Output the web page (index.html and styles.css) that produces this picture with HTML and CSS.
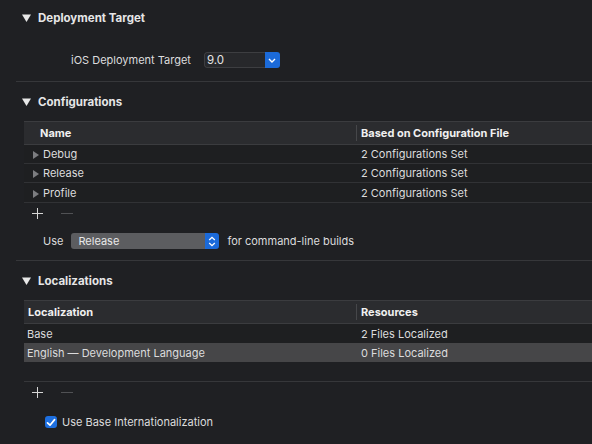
FILE: index.html
```html
<!DOCTYPE html>
<html lang="en">
<head>
    <meta charset="UTF-8">
    <title>Project Info</title>
    <link rel="stylesheet" href="styles.css">
</head>
<body>

    <!-- Deployment target -->
    <div class="section first">
        <div class="section-head">
            <svg class="disclosure" width="9" height="8" viewBox="0 0 9 8"><path d="M0 0.5H9L4.5 8Z" fill="#e8e8e8"/></svg>
            <span>Deployment Target</span>
        </div>
        <div class="target-row">
            <span class="label">iOS Deployment Target</span>
            <div class="combo">
                <span class="combo-text">9.0</span>
                <span class="combo-btn">
                    <svg width="8" height="5" viewBox="0 0 8 5"><path d="M1 1L4 4L7 1" stroke="#fff" stroke-width="1.4" fill="none"/></svg>
                </span>
            </div>
        </div>
    </div>

    <!-- Configurations -->
    <div class="section">
        <div class="section-head">
            <svg class="disclosure" width="9" height="8" viewBox="0 0 9 8"><path d="M0 0.5H9L4.5 8Z" fill="#e8e8e8"/></svg>
            <span>Configurations</span>
        </div>
        <div class="table config-table">
            <div class="thead">
                <div class="col-a">Name</div>
                <div class="col-b">Based on Configuration File</div>
            </div>
            <div class="row">
                <div class="col-a"><span class="expander"></span>Debug</div>
                <div class="col-b">2 Configurations Set</div>
            </div>
            <div class="row">
                <div class="col-a"><span class="expander"></span>Release</div>
                <div class="col-b">2 Configurations Set</div>
            </div>
            <div class="row last-row">
                <div class="col-a"><span class="expander"></span>Profile</div>
                <div class="col-b">2 Configurations Set</div>
            </div>
        </div>
        <div class="add-remove">
            <span class="add"></span>
            <span class="remove"></span>
        </div>
        <div class="use-row">
            <span>Use</span>
            <div class="popup">
                <span class="popup-text">Release</span>
                <span class="popup-btn">
                    <svg width="8" height="11" viewBox="0 0 8 11"><path d="M1.2 4L4 1.3L6.8 4M1.2 7L4 9.7L6.8 7" stroke="#fff" stroke-width="1.3" fill="none"/></svg>
                </span>
            </div>
            <span>for command-line builds</span>
        </div>
    </div>

    <!-- Localizations -->
    <div class="section last">
        <div class="section-head">
            <svg class="disclosure" width="9" height="8" viewBox="0 0 9 8"><path d="M0 0.5H9L4.5 8Z" fill="#e8e8e8"/></svg>
            <span>Localizations</span>
        </div>
        <div class="table loc-table">
            <div class="thead">
                <div class="col-a">Localization</div>
                <div class="col-b">Resources</div>
            </div>
            <div class="row plain">
                <div class="col-a">Base</div>
                <div class="col-b">2 Files Localized</div>
            </div>
            <div class="row plain selected">
                <div class="col-a">English — Development Language</div>
                <div class="col-b">0 Files Localized</div>
            </div>
            <div class="row empty"></div>
        </div>
        <div class="add-remove">
            <span class="add"></span>
            <span class="remove"></span>
        </div>
        <label class="check-row">
            <span class="checkbox">
                <svg width="10" height="9" viewBox="0 0 10 9"><path d="M1.5 4.8L4 7.2L8.6 1.6" stroke="#fff" stroke-width="1.7" fill="none" stroke-linecap="round" stroke-linejoin="round"/></svg>
            </span>
            <span>Use Base Internationalization</span>
        </label>
    </div>

</body>
</html>
```

FILE: styles.css
```css
/* Page */
body {
    margin: 0;
    background-color: #1f2023;
    color: #dcdcdd;
    font-family: Inter, "Liberation Sans", sans-serif;
    font-size: 11px;
    overflow: hidden;
}

/* Collapsible sections */
.section {
    margin-left: 16px;
    border-bottom: 1px solid #36373a;
}

.section.last {
    border-bottom: none;
}

.section-head {
    height: 39px;
    display: flex;
    align-items: center;
    gap: 7px;
    padding-left: 6px;
    font-size: 11.5px;
    font-weight: 700;
    color: #e6e6e7;
}

.section.first .section-head {
    height: 36px;
}

/* Deployment target row */
.target-row {
    display: flex;
    align-items: center;
    height: 20px;
    margin-top: 14px;
    margin-bottom: 11px;
    padding-left: 55px;
    gap: 13px;
}

.combo {
    display: flex;
    width: 76px;
    height: 16px;
    border-radius: 3px;
    overflow: hidden;
}

.combo-text {
    flex: 1;
    background-color: #27282b;
    border: 1px solid #3d3e41;
    border-right: none;
    border-radius: 3px 0 0 3px;
    padding-left: 2px;
    line-height: 14px;
    font-size: 11.5px;
    color: #e4e4e4;
}

.combo-btn {
    width: 15px;
    background-color: #1b6ad9;
    display: flex;
    align-items: center;
    justify-content: center;
}

/* Tables */
.table {
    margin-left: 8px;
}

.thead {
    display: flex;
    height: 24px;
    align-items: center;
    background-color: #2b2c2f;
    border-top: 1px solid #3b3c3f;
    border-bottom: 1px solid #3b3c3f;
    box-sizing: border-box;
    font-weight: 700;
    color: #f0f0f0;
}

.thead .col-b {
    border-left: 1px solid #46474a;
    height: 16px;
    line-height: 16px;
    padding-left: 4px;
}

.col-a {
    width: 332px;
    display: flex;
    align-items: center;
    box-sizing: border-box;
}

.config-table .thead .col-a {
    padding-left: 16px;
}

.loc-table .col-a {
    padding-left: 4px;
}

.loc-table .row .col-a {
    padding-left: 3px;
}

.col-b {
    flex: 1;
    padding-left: 5px;
}

.row {
    display: flex;
    align-items: center;
    height: 19px;
    box-sizing: border-box;
    border-bottom: 1px solid #313235;
    background-color: #1e1f21;
}

.row.last-row {
    height: 20px;
    padding-top: 1px;
}

.row .col-a {
    padding-left: 9px;
}

.row.plain {
    border-bottom: none;
}

.row.selected {
    background-color: #464648;
}

.row.empty {
    height: 20px;
    background-color: transparent;
    border-bottom: 1px solid #36373a;
}

/* Row disclosure triangle */
.expander {
    width: 0;
    height: 0;
    border-top: 4px solid transparent;
    border-bottom: 4px solid transparent;
    border-left: 6px solid #7c7d80;
    margin-right: 4px;
    margin-top: 1px;
}

/* Plus / minus buttons */
.add-remove {
    height: 20px;
    display: flex;
    align-items: center;
    padding-left: 16px;
    gap: 18px;
}

.add {
    position: relative;
    width: 11px;
    height: 11px;
}

.add::before,
.add::after {
    content: "";
    position: absolute;
    background-color: #d6d6d6;
}

.add::before {
    left: 0;
    top: 5px;
    width: 11px;
    height: 1px;
}

.add::after {
    left: 5px;
    top: 0;
    width: 1px;
    height: 11px;
}

.remove {
    width: 12px;
    height: 1px;
    background-color: #505154;
}

/* Configuration popup row */
.use-row {
    display: flex;
    align-items: center;
    height: 16px;
    margin-top: 10px;
    margin-bottom: 11px;
    padding-left: 27px;
    gap: 9px;
}

.popup {
    display: flex;
    width: 148px;
    height: 16px;
    border-radius: 3px;
    overflow: hidden;
    margin-left: -1px;
    margin-right: -1px;
}

.popup-text {
    flex: 1;
    background-color: #5c5d60;
    padding-left: 7px;
    line-height: 16px;
    color: #e8e8e8;
}

.popup-btn {
    width: 14px;
    background-color: #1b6ad9;
    display: flex;
    align-items: center;
    justify-content: center;
}

/* Checkbox */
.check-row {
    display: flex;
    align-items: center;
    gap: 5px;
    margin-top: 13px;
    padding-left: 29px;
}

.checkbox {
    width: 12px;
    height: 12px;
    border-radius: 3px;
    background-color: #1d6fe0;
    display: flex;
    align-items: center;
    justify-content: center;
}
```
